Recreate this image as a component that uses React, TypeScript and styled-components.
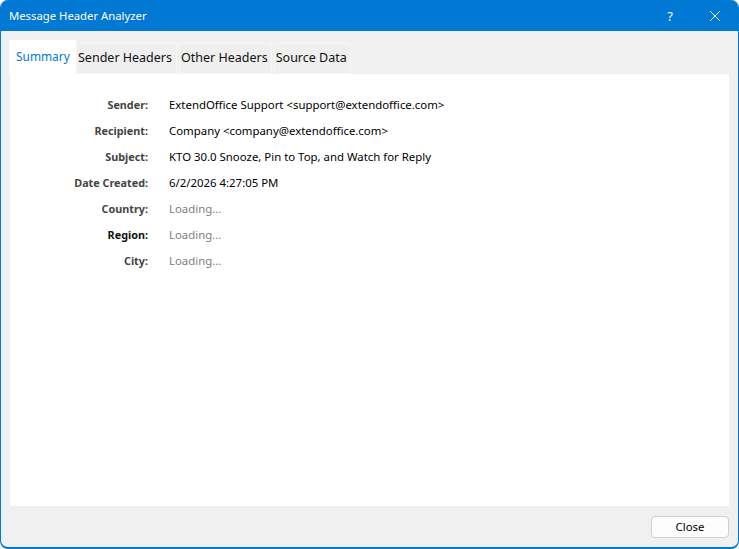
import styled, { createGlobalStyle } from 'styled-components'

const GlobalStyle = createGlobalStyle`
  html, body {
    margin: 0;
    padding: 0;
    background: #ffffff;
  }
  body {
    font-family: 'Noto Sans', 'Open Sans', 'Liberation Sans', sans-serif;
  }
`

const Dialog = styled.div`
  width: 739px;
  height: 549px;
  box-sizing: border-box;
  display: flex;
  flex-direction: column;
  overflow: hidden;
  background: #f0f0f0;
  border: solid #0078d4;
  border-width: 0 1px 2px 1px;
  border-radius: 8px;
`

const TitleBar = styled.div`
  height: 31px;
  flex: none;
  margin: 0 -1px;
  display: flex;
  align-items: center;
  padding: 0 18px 0 9px;
  background: #0078d4;
  color: #ffffff;
`

const Title = styled.div`
  flex: 1;
  font-size: 11.3px;
`

const HelpButton = styled.div`
  font-size: 13px;
  line-height: 16px;
  margin-right: 36px;
`

const TabStrip = styled.div`
  display: flex;
  align-items: flex-end;
  height: 34px;
  margin: 9px 9px 0 8px;
`

const Tab = styled.div<{ $active?: boolean }>`
  box-sizing: border-box;
  height: ${(props) => (props.$active ? '34px' : '31px')};
  width: ${(props) => (props.$active ? '67px' : 'auto')};
  margin-right: ${(props) => (props.$active ? '0' : '2px')};
  padding: ${(props) => (props.$active ? '4px 0 0 7px' : '2px 3px 0 1px')};
  background: ${(props) => (props.$active ? '#ffffff' : '#efefef')};
  color: ${(props) => (props.$active ? '#0078d4' : '#111111')};
  border: ${(props) => (props.$active ? 'none' : '1px solid #f6f6f6')};
  font-size: ${(props) => (props.$active ? '11.9px' : '12.5px')};
  line-height: 24px;
  white-space: nowrap;

  &:nth-child(2) {
    padding-right: 4px;
  }
`

const Panel = styled.div`
  flex: 1;
  margin: 0 9px;
  padding: 17px 0 0;
  background: #ffffff;
`

const FieldRow = styled.div`
  display: flex;
  height: 26px;
  align-items: center;
  font-size: 11.4px;
`

const FieldLabel = styled.div<{ $dark?: boolean }>`
  width: 138px;
  text-align: right;
  font-size: 10.8px;
  font-weight: 700;
  color: ${(props) => (props.$dark ? '#111111' : '#444444')};
  white-space: nowrap;
`

const FieldValue = styled.div<{ $loading?: boolean }>`
  margin-left: 21px;
  color: ${(props) => (props.$loading ? '#808080' : '#000000')};
  white-space: nowrap;
`

const Footer = styled.div`
  height: 41px;
  flex: none;
  display: flex;
  align-items: flex-start;
  justify-content: flex-end;
  padding: 10px 9px 0 0;
  box-sizing: border-box;
`

const CloseButton = styled.button`
  width: 78px;
  height: 22px;
  padding: 0 0 2px;
  background: #fdfdfd;
  border: 1px solid #d0d0d0;
  border-radius: 4px;
  color: #000000;
  font-family: inherit;
  font-size: 11.4px;
`

const fields = [
  { label: 'Sender:', value: 'ExtendOffice Support <support@extendoffice.com>' },
  { label: 'Recipient:', value: 'Company <company@extendoffice.com>' },
  { label: 'Subject:', value: 'KTO 30.0 Snooze, Pin to Top, and Watch for Reply' },
  { label: 'Date Created:', value: '6/2/2026 4:27:05 PM' },
  { label: 'Country:', value: 'Loading...', loading: true },
  { label: 'Region:', value: 'Loading...', loading: true, dark: true },
  { label: 'City:', value: 'Loading...', loading: true },
]

export default function App() {
  return (
    <>
      <GlobalStyle />
      <Dialog>
        <TitleBar>
          <Title>Message Header Analyzer</Title>
          <HelpButton>?</HelpButton>
          <svg width="12" height="12" viewBox="0 0 12 12" fill="none" stroke="#ffffff" strokeWidth="1">
            <path d="M1 1l10 10M11 1L1 11" />
          </svg>
        </TitleBar>
        <TabStrip>
          <Tab $active>Summary</Tab>
          <Tab>Sender Headers</Tab>
          <Tab>Other Headers</Tab>
          <Tab>Source Data</Tab>
        </TabStrip>
        <Panel>
          {fields.map((field) => (
            <FieldRow key={field.label}>
              <FieldLabel $dark={field.dark}>{field.label}</FieldLabel>
              <FieldValue $loading={field.loading}>{field.value}</FieldValue>
            </FieldRow>
          ))}
        </Panel>
        <Footer>
          <CloseButton>Close</CloseButton>
        </Footer>
      </Dialog>
    </>
  )
}
